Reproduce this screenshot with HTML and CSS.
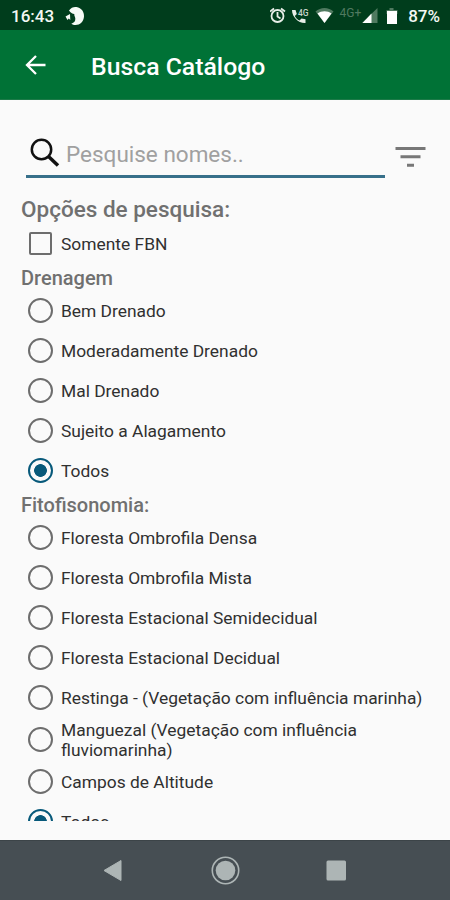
FILE: index.html
```html
<!DOCTYPE html>
<html lang="pt-BR">
<head>
<meta charset="utf-8">
<title>Busca Catálogo</title>
<link rel="stylesheet" href="styles.css">
</head>
<body>
<header class="status">
  <span class="clock">16:43</span>
  <svg class="badge" width="20" height="20" viewBox="0 0 20 20" fill="#f6faf6"><path d="M4 4.500C6 1.500 9 .5 11.500 1c5 .8 7.800 5 7.500 9.500-.3 5-4 8.500-8.500 8.500-1.800 0-3-.4-4.200-1.200 3-1 4.200-3 4-5.300-.1-2-1.300-2.500-1-4.500C7.500 8 5.500 6.500 4 4.500z"/><path d="M.5 10.500L5 8l.3 6-1.500-1.500L2.500 14z"/></svg>
  <svg class="signals" width="134" height="30" viewBox="0 0 134 30">
    <g fill="none" stroke="#e8eee8" stroke-width="1.8"><circle cx="7.500" cy="16" r="6"/><path d="M7.500 12v4.500l3 2M0 11.500l4-3M15 11.500l-4-3"/></g>
    <path fill="#e8eee8" d="M22 10h3.500l1.300 4-2 2c1.200 2.200 2.600 3.500 4.700 4.500l2-2 4 .8V23c-7 .5-13.500-6-13.500-13z"/>
    <text x="28" y="16" class="tiny">4G</text>
    <path fill="#507a60" d="M45.500 11.500c5-4.700 13-4.700 18 0l-9 11.500z"/><path fill="#fff" d="M47.500 13.500c4-3 10-3 14 0L54.500 23z"/>
    <text x="69.500" y="16.500" class="network">4G+</text>
    <path fill="#507a60" d="M107.500 8v15H92z"/><path fill="#fff" d="M101.500 13.500V23h-9z"/>
    <path fill="#507a60" d="M119.500 8h4v2h4v4h-11v-4h3z"/><path fill="#fff" d="M117 11h10v13h-10z"/>
  </svg>
  <span class="percent">87%</span>
</header>
<div class="appbar">
  <svg width="22" height="20" viewBox="0 0 22 20" fill="none" stroke="#fff" stroke-width="2.300"><path d="M20.500 10H2M11 1L2 10l9 9"/></svg>
  <h1>Busca Catálogo</h1>
</div>
<main>
  <div class="search">
    <div class="field">
      <svg width="30" height="30" viewBox="0 0 30 30" fill="none" stroke="#111"><circle cx="11.500" cy="11.500" r="9.700" stroke-width="2.500"/><path d="M18.500 18.500l9.500 9" stroke-width="3.500"/></svg>
      <span class="placeholder">Pesquise nomes..</span>
    </div>
    <svg class="filter" width="31" height="22" viewBox="0 0 31 22" fill="#777"><path d="M.5 0h30v3H.5zM5.500 8.300h20v3h-20zM12 16.700h7v3h-7z"/></svg>
  </div>
  <div class="options">
    <h2 class="lead">Opções de pesquisa:</h2>
    <div class="row"><i class="check"></i><span>Somente FBN</span></div>
    <h2>Drenagem</h2>
    <div class="row"><i class="radio"></i><span>Bem Drenado</span></div>
    <div class="row"><i class="radio"></i><span>Moderadamente Drenado</span></div>
    <div class="row"><i class="radio"></i><span>Mal Drenado</span></div>
    <div class="row"><i class="radio"></i><span>Sujeito a Alagamento</span></div>
    <div class="row"><i class="radio on"></i><span>Todos</span></div>
    <h2>Fitofisonomia:</h2>
    <div class="row"><i class="radio"></i><span>Floresta Ombrofila Densa</span></div>
    <div class="row"><i class="radio"></i><span>Floresta Ombrofila Mista</span></div>
    <div class="row"><i class="radio"></i><span>Floresta Estacional Semidecidual</span></div>
    <div class="row"><i class="radio"></i><span>Floresta Estacional Decidual</span></div>
    <div class="row"><i class="radio"></i><span>Restinga - (Vegetação com influência marinha)</span></div>
    <div class="row tall"><i class="radio"></i><span>Manguezal (Vegetação com influência<br>fluviomarinha)</span></div>
    <div class="row"><i class="radio"></i><span>Campos de Altitude</span></div>
    <div class="row"><i class="radio on"></i><span>Todos</span></div>
  </div>
</main>
<nav>
  <svg width="450" height="60" viewBox="0 0 450 60" fill="#adb5b5"><path d="M104 29.500l17-10v20z" stroke="#adb5b5" stroke-linejoin="round"/><circle cx="225.500" cy="29.500" r="9.800"/><circle cx="225.500" cy="29.500" r="13.200" fill="none" stroke="#adb5b5" stroke-width="1.600"/><rect x="326.500" y="19.500" width="19.500" height="20" rx="1.500"/></svg>
</nav>
</body>
</html>
```
FILE: styles.css
```css
* { box-sizing: border-box; }
body {
  margin: 0;
  width: 450px;
  height: 900px;
  display: flex;
  flex-direction: column;
  overflow: hidden;
  background: #fafafa;
  font-family: Roboto, sans-serif;
}
svg { display: block; flex: none; }
.status {
  height: 30px;
  background: #003d1c;
  color: #f4f8f4;
  display: flex;
  align-items: center;
  padding: 2px 10px 0 11px;
  font-size: 17px;
  font-weight: 500;
}
.clock { width: 54px; }
.signals { margin: -2px 4px 0 auto; }
.tiny { font-size: 8.5px; font-weight: 500; fill: #c8d4ca; }
.network { font-size: 12px; font-weight: 400; fill: #507a60; }
.appbar {
  height: 70px;
  background: #007236;
  border-bottom: 1px solid #1c7a48;
  display: flex;
  align-items: center;
  padding: 1px 25px 0;
  gap: 44px;
}
h1 {
  margin: 3px 0 0;
  color: #fff;
  font-size: 24.8px;
  font-weight: 500;
}
main { height: 721px; overflow: hidden; padding: 36px 20px 0; }
.search { display: flex; height: 42px; padding-left: 6px; }
.field {
  width: 359px;
  border-bottom: 3px solid #37708a;
  display: flex;
  align-items: flex-start;
  padding: 2px 0 0 4px;
  gap: 6px;
}
.placeholder { color: #a0a0a0; font-size: 22.5px; line-height: 32px; }
.filter { margin: 11px 0 0 10px; }
.options { padding-top: 17px; }
h2 {
  margin: 0;
  height: 27px;
  padding-left: 1px;
  line-height: 29px;
  font-size: 20px;
  font-weight: 500;
  color: #707070;
}
.lead { height: 29px; font-size: 22.5px; line-height: 29px; }
.row {
  height: 40px;
  display: flex;
  align-items: center;
  padding-left: 8px;
  gap: 8px;
  color: #303030;
  font-size: 17.4px;
  line-height: 20px;
  white-space: nowrap;
}
.tall { height: 44px; }
.check, .radio { flex: none; border: 2px solid #6d6d6d; margin-bottom: 1px; }
.check { width: 23px; height: 23px; margin: 0 1px 1px; border-radius: 2px; }
.radio { width: 25px; height: 25px; border-width: 2.5px; border-radius: 50%; }
.on { border-color: #07597a; background: radial-gradient(circle, #07597a 6px, transparent 6.7px); }
nav { height: 60px; margin-top: auto; background: #464e53; border-top: 1px solid #3c4448; }
```
